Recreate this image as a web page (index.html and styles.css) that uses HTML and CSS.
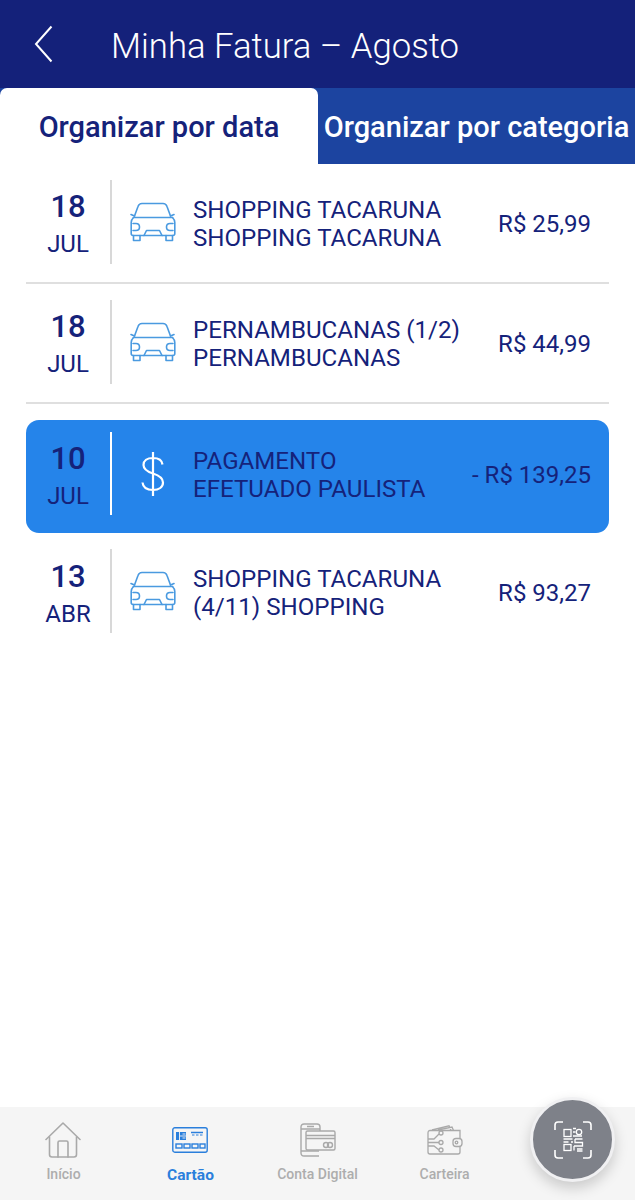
FILE: index.html
```html
<!DOCTYPE html>
<html lang="pt-BR">
<head>
<meta charset="utf-8">
<title>Minha Fatura</title>
<link rel="stylesheet" href="styles.css">
</head>
<body>
<svg class="defs" width="0" height="0" aria-hidden="true">
  <symbol id="car" viewBox="0 0 46 40">
    <g fill="none" stroke="currentColor" stroke-width="1.6" stroke-linejoin="round" stroke-linecap="round">
      <path d="M4.500 14 8 4.500C8.600 2.700 9.800 1.500 12 1.500H33C35.200 1.500 36.400 2.700 37 4.500L40.500 14"/>
      <path d="M3.500 15.500H42.500"/>
      <path d="M4.500 14 1 12.500M40.500 14 44 12.500"/>
      <path d="M3.500 15.500C2 17 1.200 18.500 1.200 20.500V31.500C1.200 32.800 2 33.500 3.200 33.500H42.800C44 33.500 44.800 32.800 44.800 31.500V20.500C44.800 18.500 44 17 42.500 15.500"/>
      <path d="M3 21.500H6C8 21.500 9.500 23 9.500 25S8 28.500 6 28.500H3M43 21.500H40C38 21.500 36.500 23 36.500 25S38 28.500 40 28.500H43"/>
      <path d="M14 33.500 16.500 28.500H29.500L32 33.500"/>
      <path d="M3.500 33.500V38.500H10V33.500M36 33.500V38.500H42.500V33.500"/>
    </g>
  </symbol>
</svg>

<header class="topbar">
  <svg class="back" width="20" height="38" viewBox="0 0 20 38" aria-hidden="true"><path d="M17.500 1.500 2 19l15.500 17.500" fill="none" stroke="#fff" stroke-width="2"/></svg>
  <h1 class="title">Minha Fatura – Agosto</h1>
</header>

<div class="tabs">
  <div class="tab tab-active">Organizar por data</div>
  <div class="tab tab-other">Organizar por categoria</div>
</div>

<main class="list">
  <article class="row row-line">
    <div class="date"><span class="day">18</span><span class="month">JUL</span></div>
    <div class="icon"><svg class="car" width="46" height="40"><use href="#car"/></svg></div>
    <div class="desc">SHOPPING TACARUNA<br>SHOPPING TACARUNA</div>
    <div class="amount">R$ 25,99</div>
  </article>
  <article class="row row-line">
    <div class="date"><span class="day">18</span><span class="month">JUL</span></div>
    <div class="icon"><svg class="car" width="46" height="40"><use href="#car"/></svg></div>
    <div class="desc">PERNAMBUCANAS (1/2)<br>PERNAMBUCANAS</div>
    <div class="amount">R$ 44,99</div>
  </article>
  <article class="row row-paid">
    <div class="date"><span class="day">10</span><span class="month">JUL</span></div>
    <div class="icon">
      <svg width="24" height="46" viewBox="0 0 24 46" aria-hidden="true"><path d="M21.500 13.500C21 9.500 17.500 7 12 7 6 7 2.500 9.800 2.500 14c0 4.500 3.500 6.500 9.500 8.500 6.500 2.100 10 4.300 10 9 0 4.600-4 7.500-10 7.500-6.200 0-10-2.800-10.500-7.500M12 1v44" fill="none" stroke="#fff" stroke-width="2.200"/></svg>
    </div>
    <div class="desc">PAGAMENTO<br>EFETUADO PAULISTA</div>
    <div class="amount">- R$ 139,25</div>
  </article>
  <article class="row row-last">
    <div class="date"><span class="day">13</span><span class="month">ABR</span></div>
    <div class="icon"><svg class="car" width="46" height="40"><use href="#car"/></svg></div>
    <div class="desc">SHOPPING TACARUNA<br>(4/11) SHOPPING</div>
    <div class="amount">R$ 93,27</div>
  </article>
</main>

<nav class="nav">
  <div class="nav-item nav-shift">
    <svg width="36" height="37" viewBox="0 0 36 37" aria-hidden="true"><g fill="none" stroke="#a9a9a9" stroke-width="1.600" stroke-linejoin="round" stroke-linecap="round"><path d="M1 18 18 1.500 35 18"/><path d="M4.500 15.500V33c0 1.500 1 2.500 2.500 2.500h22c1.500 0 2.500-1 2.500-2.500V15.500"/><path d="M13 35.500V21c0-1 .6-1.500 1.500-1.500h7c.9 0 1.500.5 1.500 1.500v14.500"/></g></svg>
    <span class="nav-label">Início</span>
  </div>
  <div class="nav-item nav-current nav-shift">
    <svg width="36" height="26" viewBox="0 0 36 26" aria-hidden="true"><g fill="none" stroke="#2a7fdc" stroke-width="1.400"><rect x=".8" y=".8" width="34.400" height="24.400" rx="2"/><rect x="4" y="5" width="10" height="8" fill="#2a7fdc" stroke="none"/><path d="M7.500 5v8M7.500 9h6.500M10.500 7h3M10.500 11h3" stroke="#f5f5f5" stroke-width=".9"/><path d="M19 5.500h12" stroke-width="1.500"/><path d="M20 8h2.500M24 8h2.500M28 8h2.500" stroke-width="1.200"/><rect x="4" y="17" width="6" height="4" /><rect x="12" y="17" width="6" height="4"/><rect x="20" y="17" width="6" height="4"/><rect x="28" y="17" width="5" height="4"/></g></svg>
    <span class="nav-label">Cartão</span>
  </div>
  <div class="nav-item">
    <svg width="36" height="34" viewBox="0 0 36 34" aria-hidden="true"><g fill="none" stroke="#a9a9a9" stroke-width="1.400"><path d="M19 33H4c-1.800 0-3-1.200-3-3V4c0-1.800 1.200-3 3-3h13c1.800 0 3 1.200 3 3v4"/><path d="M1 6h19M7 3.500h7M1 28h18"/><rect x="6" y="8" width="29" height="19" rx="1.500" fill="#f5f5f5"/><path d="M6 12.500h29M6 15.500h29"/><circle cx="26" cy="22" r="2.500"/><circle cx="30" cy="22" r="2.500"/></g></svg>
    <span class="nav-label">Conta Digital</span>
  </div>
  <div class="nav-item">
    <svg width="36" height="30" viewBox="0 0 36 30" aria-hidden="true"><g fill="none" stroke="#a9a9a9" stroke-width="1.300"><path d="M1 8V27c0 1.200.8 2 2 2h28c1.200 0 2-.8 2-2V5.500H3C1.800 5.500 1 6.500 1 8"/><path d="M5 5 22 .8l2 4.700M11 5 25 2l1.500 3.500"/><rect x="26" y="13.500" width="9" height="8" rx="3" fill="#f5f5f5"/><circle cx="29.500" cy="17.500" r="1.300"/><path d="M1 14h6l5-5M1 17.500h11M1 21h6l5 4"/><circle cx="14" cy="8" r="2"/><circle cx="14" cy="17.500" r="2"/><circle cx="14" cy="25" r="2"/></g></svg>
    <span class="nav-label">Carteira</span>
  </div>
  <div class="nav-item"></div>
  <button class="qr" type="button" aria-label="QR code">
    <svg width="38" height="38" viewBox="0 0 38 38" aria-hidden="true"><g fill="none" stroke="#fff"><path d="M1 9V4c0-1.700 1.300-3 3-3h5M29 1h5c1.700 0 3 1.300 3 3v5M37 29v5c0 1.700-1.300 3-3 3h-5M9 37H4c-1.700 0-3-1.300-3-3v-5" stroke-width="1.600"/><g stroke-width="1.300"><rect x="10" y="8.500" width="7" height="7"/><rect x="10" y="23.500" width="7" height="6"/><circle cx="25" cy="11" r="2.700"/><path d="M19 7.500h3M19 11h2.500M19 15h9M9.500 18h9M9.500 21h5M17 21h2M21 18h7.500M21 18v3.500h7.500v3.500H20M20 25v4.500M23 28h5.500M23 30h5.500"/></g></g></svg>
  </button>
</nav>
</body>
</html>
```
FILE: styles.css
```css
* { box-sizing: border-box; }
html, body { margin: 0; padding: 0; }
body {
  width: 635px;
  height: 1200px;
  display: flex;
  flex-direction: column;
  position: relative;
  overflow: hidden;
  background: #fff;
  color: #15227a;
  font-family: Roboto, "Liberation Sans", sans-serif;
}
.defs { position: absolute; }

.topbar {
  height: 88px;
  flex: none;
  background: #14217a;
  display: flex;
  align-items: center;
  padding: 0 0 0 34px;
}
.back { flex: none; margin-right: 57px; }
.title {
  margin: 0;
  padding-top: 4px;
  color: #fff;
  font-size: 34.700px;
  font-weight: 300;
  white-space: nowrap;
}

.tabs { display: flex; height: 76px; flex: none; background: #1c44a0; }
.tab {
  height: 76px;
  display: flex;
  align-items: center;
  justify-content: center;
  font-size: 29px;
  font-weight: 500;
  white-space: nowrap;
  padding-top: 2px;
}
.tab-active {
  width: 318px;
  background: #fff;
  border-radius: 7px 7px 0 0;
  color: #15227a;
}
.tab-other { flex: 1; color: #fff; }

.list {
  flex: 1;
  display: flex;
  flex-direction: column;
  padding: 16px 26px 0;
}
.row {
  display: flex;
  align-items: stretch;
  flex: none;
}
.row-line {
  height: 104px;
  padding-bottom: 18px;
  border-bottom: 2px solid #dfdfdf;
  margin-bottom: 16px;
}
.row-paid {
  height: 113px;
  padding: 12px 0 18px;
  margin-bottom: 16px;
  background: #2584ea;
  border-radius: 13px;
}
.row-last { height: 84px; }

.date {
  width: 86px;
  flex: none;
  display: flex;
  flex-direction: column;
  align-items: center;
  justify-content: center;
  padding-top: 6px;
  border-right: 2px solid #d8d8d8;
}
.row-paid .date { border-right-color: #fff; padding-top: 8px; }
.row-last .date { padding-top: 8px; }
.day { font-size: 31px; font-weight: 500; line-height: 38px; }
.month { font-size: 24px; line-height: 37px; }

.icon {
  width: 81px;
  flex: none;
  display: flex;
  align-items: center;
  justify-content: center;
}
.car { color: #4a9ae0; display: block; }

.desc {
  flex: 1;
  align-self: center;
  font-size: 24.100px;
  line-height: 28px;
  white-space: nowrap;
  padding-top: 4px;
}
.row-paid .desc { padding-top: 2px; }
.amount {
  flex: none;
  align-self: center;
  padding: 4px 18px 0 0;
  font-size: 24px;
  white-space: nowrap;
}
.row-paid .amount { padding-top: 2px; }

.nav {
  height: 93px;
  flex: none;
  background: #f5f5f5;
  display: grid;
  grid-template-columns: repeat(5, 127px);
}
.nav-item {
  display: flex;
  flex-direction: column;
  align-items: center;
  padding-top: 14px;
  position: relative;
}
.nav-item svg { display: block; height: 38px; }
.nav-shift svg { margin-right: 2px; }
.nav-label {
  position: absolute;
  top: 59px;
  font-size: 14px;
  font-weight: 500;
  color: #adadad;
  white-space: nowrap;
}
.nav-current .nav-label { color: #2a7fdc; font-size: 15.500px; font-weight: 700; }
.qr {
  position: absolute;
  left: 530px;
  bottom: 18px;
  width: 85px;
  height: 85px;
  padding: 0;
  border: 3px solid #f0f0f2;
  border-radius: 50%;
  background: #7e8189;
  box-shadow: 0 6px 14px rgba(0, 0, 0, .18);
  display: flex;
  align-items: center;
  justify-content: center;
}
```
